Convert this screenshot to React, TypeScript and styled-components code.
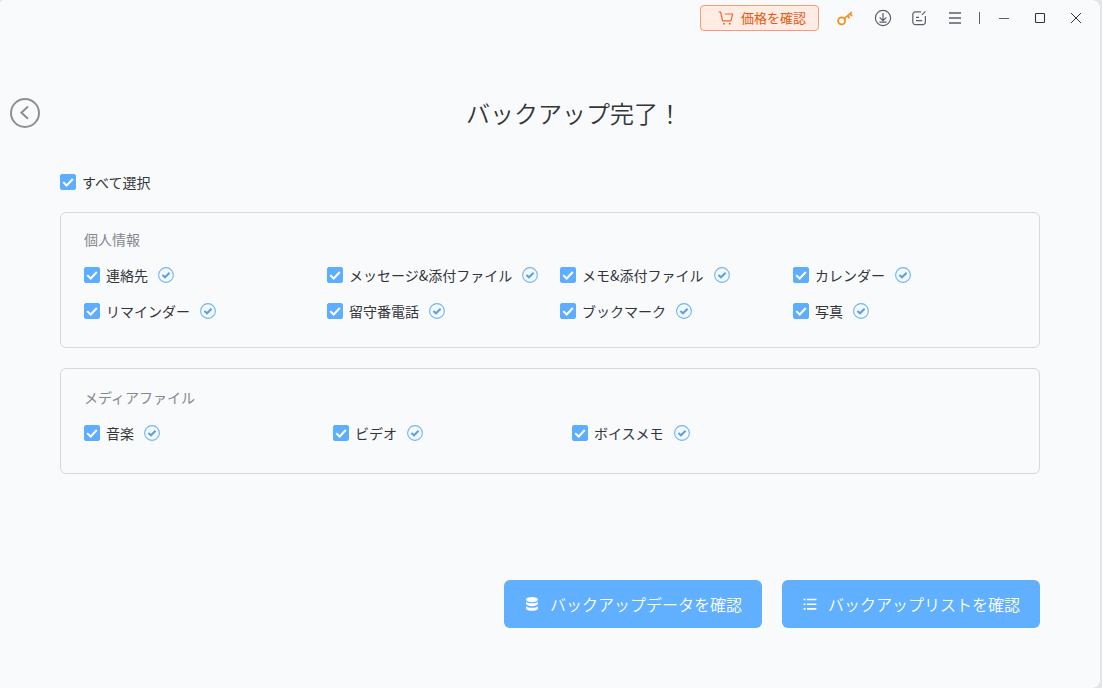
import React from "react";
import styled, { createGlobalStyle } from "styled-components";

const GlobalStyle = createGlobalStyle`
  *, *::before, *::after { box-sizing: border-box; }
  body {
    margin: 0;
    background: #e3e4e7;
    color: #333538;
    font-family: "Noto Sans CJK JP", "Noto Sans", sans-serif;
    font-size: 14px;
    line-height: 20px;
    font-weight: 400;
  }
  button { font: inherit; border: 0; padding: 0; background: none; cursor: pointer; }
`;

const Shell = styled.div`
  min-height: 100vh;
  padding-right: 2px;
  display: flex;
`;

const Window = styled.div`
  flex: 1;
  min-width: 0;
  display: flex;
  flex-direction: column;
  background: #f8fafc;
  border-radius: 4px 8px 8px 0;
`;

const TitleBar = styled.header`
  display: flex;
  justify-content: flex-end;
  align-items: center;
  height: 36px;
  padding-right: 14px;
`;

const PriceButton = styled.button`
  display: flex;
  align-items: center;
  gap: 7px;
  height: 26px;
  padding: 0 12px 0 17px;
  margin-right: 18px;
  border: 1px solid #fb9a6c;
  border-radius: 4px;
  background: #ffece4;
  color: #e8590c;
  font-size: 13px;
  white-space: nowrap;
`;

const Tools = styled.div`
  display: flex;
  gap: 16px;
`;

const IconButton = styled.button<{ $color?: string }>`
  display: grid;
  place-items: center;
  width: 20px;
  height: 20px;
  color: ${(p) => p.$color ?? "#5c5f68"};
`;

const Divider = styled.span`
  width: 1px;
  height: 12px;
  margin: 0 14px;
  background: #5c5f68;
`;

const Heading = styled.div`
  display: flex;
  align-items: center;
  margin-top: 59px;
  padding: 0 10px;
`;

const BackButton = styled.button`
  display: grid;
  place-items: center;
  width: 30px;
  height: 36px;
  color: #8e8f92;
`;

const Title = styled.h1`
  flex: 1;
  margin: 0;
  padding-left: 18px;
  text-align: center;
  font-size: 24px;
  line-height: 36px;
  font-weight: 350;
`;

const Content = styled.main`
  flex: 1;
  display: flex;
  flex-direction: column;
  padding: 41px 60px 60px;
`;

const CheckLabel = styled.label`
  display: inline-flex;
  align-items: center;
  gap: 6px;
  white-space: nowrap;
  cursor: pointer;
`;

const CheckBox = styled.span`
  position: relative;
  display: block;
  width: 16px;
  height: 16px;
  color: #fff;

  input {
    appearance: none;
    display: block;
    width: 16px;
    height: 16px;
    margin: 0;
    border: 1px solid #5eaeff;
    border-radius: 2px;
    background: #fff;
  }
  input:checked { background: #5eaeff; }
  svg {
    position: absolute;
    inset: 0;
    pointer-events: none;
    visibility: hidden;
  }
  input:checked + svg { visibility: visible; }
`;

const Panels = styled.div`
  display: grid;
  gap: 20px;
  margin: 18px 0 40px;
`;

const Panel = styled.fieldset<{ $roomy?: boolean }>`
  min-width: 0;
  margin: 0;
  padding: ${(p) => (p.$roomy ? "18px 13px 30px 23px" : "16px 13px 26px 23px")};
  border: 1px solid #d6d8dd;
  border-radius: 6px;
`;

const PanelTitle = styled.legend`
  float: left;
  width: 100%;
  padding: 0;
  margin-bottom: 16px;
  color: #85878f;
`;

const Items = styled.div<{ $columns: string }>`
  clear: both;
  display: grid;
  grid-template-columns: ${(p) => p.$columns};
  row-gap: 16px;
`;

const Item = styled.div`
  display: flex;
  align-items: center;
  gap: 10px;
`;

const Actions = styled.div`
  display: flex;
  justify-content: flex-end;
  gap: 20px;
  margin-top: auto;
`;

const ActionButton = styled.button`
  display: flex;
  align-items: center;
  gap: 10px;
  height: 48px;
  padding: 0 20px;
  border-radius: 6px;
  background: #60b0ff;
  color: #fff;
  font-size: 16px;
  font-weight: 350;
  white-space: nowrap;
`;

function Check({ label }: { label: string }) {
  return (
    <CheckLabel>
      <CheckBox>
        <input type="checkbox" defaultChecked />
        <svg width="16" height="16" viewBox="0 0 16 16" fill="none" stroke="currentColor" strokeWidth="2">
          <path d="M3.2 8.1 6.7 11.5 12.8 5" />
        </svg>
      </CheckBox>
      {label}
    </CheckLabel>
  );
}

function DoneIcon() {
  return (
    <svg width="16" height="16" viewBox="0 0 16 16" fill="none" role="img" aria-label="完了">
      <circle cx="8" cy="8" r="7.4" fill="#f2faff" stroke="#72b3f2" strokeWidth="1.1" />
      <path d="M4.4 7.9 7 10.3 11.6 5.7" stroke="#5f9fe0" strokeWidth="2" />
    </svg>
  );
}

type GroupProps = { title: string; items: string[]; columns: string; roomy?: boolean };

function Group({ title, items, columns, roomy }: GroupProps) {
  return (
    <Panel $roomy={roomy}>
      <PanelTitle>{title}</PanelTitle>
      <Items $columns={columns}>
        {items.map((name) => (
          <Item key={name}>
            <Check label={name} />
            <DoneIcon />
          </Item>
        ))}
      </Items>
    </Panel>
  );
}

const personal = [
  "連絡先",
  "メッセージ&添付ファイル",
  "メモ&添付ファイル",
  "カレンダー",
  "リマインダー",
  "留守番電話",
  "ブックマーク",
  "写真",
];
const media = ["音楽", "ビデオ", "ボイスメモ"];

export default function App() {
  return (
    <Shell>
      <GlobalStyle />
      <Window>
        <TitleBar>
          <PriceButton>
            <svg width="16" height="16" viewBox="0 0 16 16" fill="none" stroke="#ea6a35" strokeWidth="1.2">
              <path d="M0.5 2H2.6L4.6 10.9H13L14.6 4H6.8" strokeLinejoin="round" />
              <circle cx="6" cy="13.8" r="1" fill="#ea6a35" stroke="none" />
              <circle cx="11.8" cy="13.8" r="1" fill="#ea6a35" stroke="none" />
            </svg>
            価格を確認
          </PriceButton>
          <Tools>
            <IconButton aria-label="登録" $color="#f68b1f">
              <svg width="20" height="16" viewBox="0 0 20 16" fill="none" stroke="currentColor" strokeWidth="1.7">
                <circle cx="4.6" cy="10.9" r="3.5" />
                <path d="M7.2 8.6 15 2.2M10.6 5.8l2 2.5M13 3.8l2 2.5" />
              </svg>
            </IconButton>
            <IconButton aria-label="ダウンロード">
              <svg width="18" height="18" viewBox="0 0 18 18" fill="none" stroke="currentColor" strokeWidth="1.2">
                <circle cx="9" cy="9" r="7.6" />
                <path d="M9 4v7.6M5.6 8.4 9 11.7l3.4-3.3M5.4 13.2h7.2" />
              </svg>
            </IconButton>
            <IconButton aria-label="フィードバック">
              <svg width="16" height="16" viewBox="0 0 16 16" fill="none" stroke="currentColor" strokeWidth="1.2">
                <path d="M10 1.8H4.4A2.6 2.6 0 0 0 1.8 4.4v7.6a2.6 2.6 0 0 0 2.6 2.6h7.4a2.6 2.6 0 0 0 2.6-2.6V6M11 4.8 14.4 1.4M5 7.4h3M5 10.6h6.2" />
              </svg>
            </IconButton>
            <IconButton aria-label="メニュー">
              <svg width="14" height="14" viewBox="0 0 14 14" stroke="currentColor" strokeWidth="1.4">
                <path d="M1 2h12M1 7h12M1 12h12" />
              </svg>
            </IconButton>
          </Tools>
          <Divider />
          <Tools>
            <IconButton aria-label="最小化">
              <svg width="12" height="12" viewBox="0 0 12 12" stroke="currentColor">
                <path d="M1 6.5h10" />
              </svg>
            </IconButton>
            <IconButton aria-label="最大化" $color="#33353a">
              <svg width="12" height="12" viewBox="0 0 12 12" fill="none" stroke="currentColor" strokeWidth="1.1">
                <rect x="1.5" y="1.5" width="9" height="9" rx="0.8" />
              </svg>
            </IconButton>
            <IconButton aria-label="閉じる" $color="#33353a">
              <svg width="12" height="12" viewBox="0 0 12 12" stroke="currentColor">
                <path d="M1 1 11 11M11 1 1 11" />
              </svg>
            </IconButton>
          </Tools>
        </TitleBar>

        <Heading>
          <BackButton aria-label="戻る">
            <svg width="30" height="30" viewBox="0 0 30 30" fill="none" stroke="currentColor" strokeWidth="2">
              <circle cx="15" cy="15" r="14" />
              <path d="M18 8.6 11.4 14.7 18 20.8" />
            </svg>
          </BackButton>
          <Title>バックアップ完了！</Title>
        </Heading>

        <Content>
          <div>
            <Check label="すべて選択" />
          </div>
          <Panels>
            <Group title="個人情報" items={personal} columns="243fr 233fr 233fr 233fr" />
            <Group title="メディアファイル" items={media} columns="249fr 239fr 454fr" roomy />
          </Panels>
          <Actions>
            <ActionButton>
              <svg width="16" height="16" viewBox="0 0 16 16" fill="currentColor">
                <ellipse cx="8" cy="3.6" rx="6" ry="2.7" />
                <path d="M2 5.7C4 7.7 12 7.7 14 5.7V7.8C13.4 10.9 2.6 10.9 2 7.8Z" />
                <path d="M2 10.3C4 12.3 12 12.3 14 10.3V12.4C13.4 15.5 2.6 15.5 2 12.4Z" />
              </svg>
              バックアップデータを確認
            </ActionButton>
            <ActionButton>
              <svg width="16" height="16" viewBox="0 0 16 16" stroke="currentColor" strokeWidth="1.6">
                <path d="M5 3.5h9.4M5 8.2h9.4M5 12.9h9.4M1.6 3.5h2M1.6 8.2h2M1.6 12.9h2" />
              </svg>
              バックアップリストを確認
            </ActionButton>
          </Actions>
        </Content>
      </Window>
    </Shell>
  );
}
